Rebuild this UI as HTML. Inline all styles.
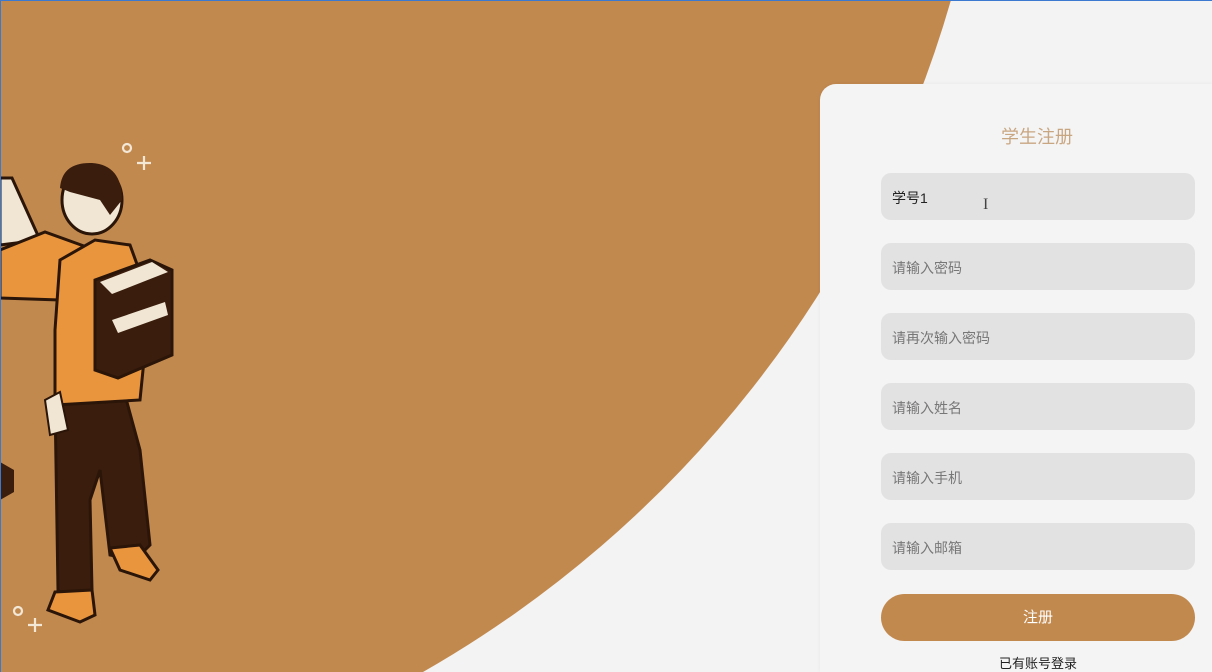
<!DOCTYPE html>
<html style="overflow:hidden;height:672px"><head><meta charset="utf-8"><style>
*{margin:0;padding:0;box-sizing:border-box}
body{width:1212px;height:672px;overflow:hidden;background:#f3f3f3;position:relative;font-family:"Liberation Sans","Noto Sans CJK SC",sans-serif}
svg.bg{position:absolute;left:0;top:0}
.card{position:absolute;left:820px;top:84px;width:392px;height:588px;background:#f4f4f4;border-radius:16px 0 0 0;box-shadow:0 0 4px rgba(0,0,0,0.06)}
.title{position:absolute;left:820px;top:123px;width:434px;text-align:center;font-size:18px;color:#c9a682}
.in{position:absolute;left:881px;width:314px;height:47px;background:#e3e2e3;border-radius:10px;font-size:14px;color:#777;padding-left:11px;line-height:50px}
.btn{position:absolute;left:881px;top:594px;width:314px;height:47px;background:#c2894f;border-radius:24px;color:#fff;font-size:15px;text-align:center;line-height:47px}
.link{position:absolute;left:881px;top:653px;width:314px;text-align:center;font-size:13px;color:#222}
</style></head><body>
<svg class="bg" width="1212" height="672" viewBox="0 0 1212 672">
<path d="M0,0 L951,0 A1135,1135 0 0 1 423,672 L0,672 Z" fill="#c2894f"/>
<g stroke="#f3e7d6" stroke-width="2.2" fill="none">
<circle cx="127" cy="148" r="4"/><path d="M144,156v14M137,163h14"/>
<circle cx="18" cy="611" r="4"/><path d="M35,618v14M28,625h14"/>
</g>
<path d="M0,178 L12,178 L40,240 L0,245 Z" fill="#f1e6d4" stroke="#2a1508" stroke-width="3"/>
<path d="M0,462 L14,470 L14,492 L0,500 Z" fill="#3a1d0c"/>
<path d="M0,250 L45,232 L95,250 L110,300 L60,300 L0,298 Z" fill="#e9953e" stroke="#2a1508" stroke-width="3"/>
<path d="M55,400 L125,395 L140,450 L150,545 L135,560 L110,555 L100,470 L90,500 L92,590 L70,600 L58,590 Z" fill="#3a1d0c" stroke="#2a1508" stroke-width="3"/>
<path d="M110,548 L140,545 L158,570 L150,580 L120,570 Z" fill="#e9953e" stroke="#2a1508" stroke-width="3"/>
<path d="M55,592 L92,590 L95,615 L80,622 L48,610 Z" fill="#e9953e" stroke="#2a1508" stroke-width="3"/>
<path d="M60,260 L95,240 L130,245 L150,300 L140,400 L55,405 L55,330 Z" fill="#e9953e" stroke="#2a1508" stroke-width="3"/>
<path d="M45,400 L60,392 L68,430 L50,435 Z" fill="#f1e6d4" stroke="#2a1508" stroke-width="2"/>
<path d="M95,280 L150,260 L172,270 L172,355 L118,378 L95,370 Z" fill="#3a1d0c" stroke="#2a1508" stroke-width="3"/>
<path d="M100,282 L152,262 L168,272 L112,294 Z" fill="#f1e6d4"/>
<path d="M112,320 L165,302 L168,315 L118,333 Z" fill="#f1e6d4"/>
<ellipse cx="92" cy="200" rx="30" ry="34" fill="#f1e6d4" stroke="#2a1508" stroke-width="3"/>
<path d="M60,188 Q62,162 92,163 Q122,165 122,200 L110,215 L100,200 L70,192 Z" fill="#3a1d0c"/>
</svg>
<div class="card"></div>
<div class="title">学生注册</div>
<div class="in" style="top:173px;color:#222">学号1</div>
<div style="position:absolute;left:983px;top:196px;font-size:16px;color:#444;font-family:'Liberation Serif',serif">I</div>
<div class="in" style="top:243px">请输入密码</div>
<div class="in" style="top:313px">请再次输入密码</div>
<div class="in" style="top:383px">请输入姓名</div>
<div class="in" style="top:453px">请输入手机</div>
<div class="in" style="top:523px">请输入邮箱</div>
<div class="btn">注册</div>
<div class="link">已有账号登录</div>
<div style="position:absolute;left:0;top:0;width:1px;height:672px;background:#3b78d0"></div>
<div style="position:absolute;left:0;top:0;width:1212px;height:1px;background:#3b78d0"></div>
</body></html>
